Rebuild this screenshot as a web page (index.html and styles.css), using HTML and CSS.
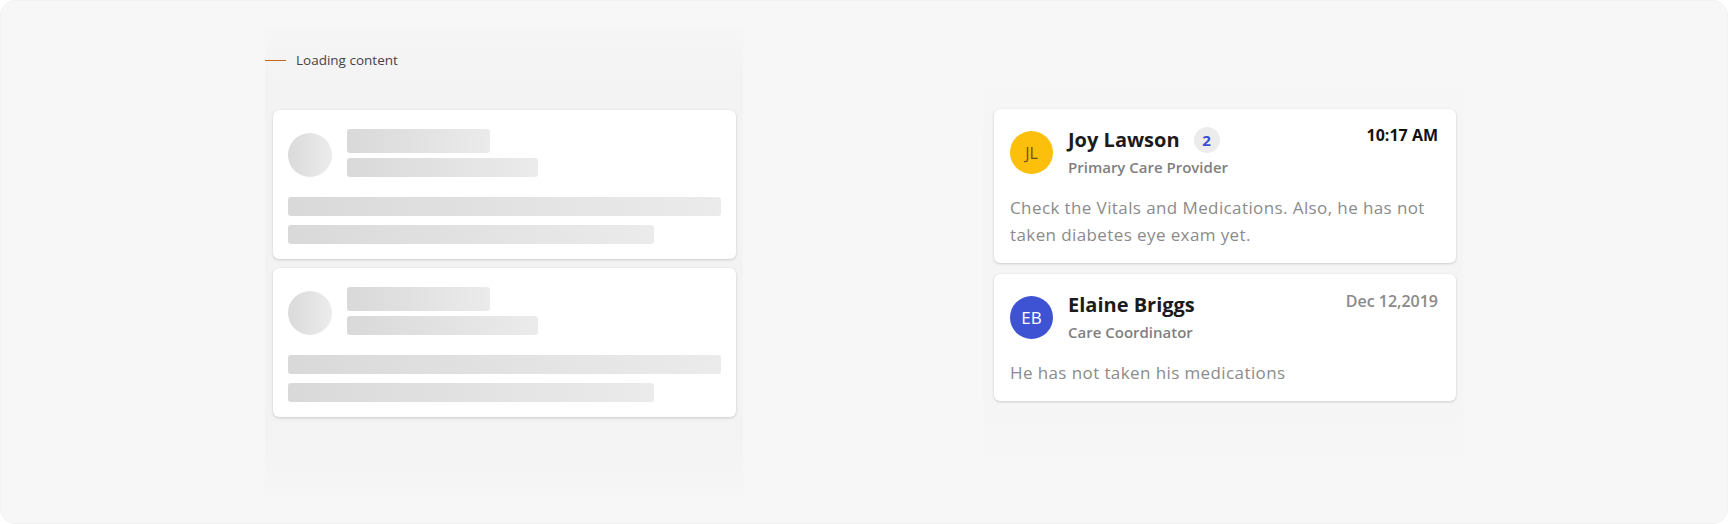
FILE: index.html
```html
<!DOCTYPE html>
<html lang="en">
<head>
<meta charset="utf-8">
<title>Messages</title>
<link rel="stylesheet" href="styles.css">
</head>
<body>
<div class="frame">
  <section class="panel panel-loading">
    <div class="loading-head">
      <span class="loading-line"></span>
      <span class="loading-text">Loading content</span>
    </div>
    <div class="card skel-card">
      <div class="skel-head">
        <div class="skel-circle"></div>
        <div class="skel-lines">
          <div class="skel-bar skel-title"></div>
          <div class="skel-bar skel-sub"></div>
        </div>
      </div>
      <div class="skel-bar skel-full"></div>
      <div class="skel-bar skel-part"></div>
    </div>
    <div class="card skel-card">
      <div class="skel-head">
        <div class="skel-circle"></div>
        <div class="skel-lines">
          <div class="skel-bar skel-title"></div>
          <div class="skel-bar skel-sub"></div>
        </div>
      </div>
      <div class="skel-bar skel-full"></div>
      <div class="skel-bar skel-part"></div>
    </div>
  </section>

  <section class="panel panel-msgs">
    <article class="card msg-card msg-first">
      <div class="msg-head">
        <div class="avatar avatar-jl">JL</div>
        <div class="msg-who">
          <div class="msg-name-row">
            <span class="msg-name">Joy Lawson</span>
            <span class="badge">2</span>
          </div>
          <div class="msg-role">Primary Care Provider</div>
        </div>
        <div class="msg-time">10:17 AM</div>
      </div>
      <p class="msg-body">Check the Vitals and Medications. Also, he has not taken diabetes eye exam yet.</p>
    </article>
    <article class="card msg-card">
      <div class="msg-head">
        <div class="avatar avatar-eb">EB</div>
        <div class="msg-who">
          <div class="msg-name-row">
            <span class="msg-name">Elaine Briggs</span>
          </div>
          <div class="msg-role">Care Coordinator</div>
        </div>
        <div class="msg-time msg-date">Dec 12,2019</div>
      </div>
      <p class="msg-body">He has not taken his medications</p>
    </article>
  </section>
</div>
</body>
</html>
```

FILE: styles.css
```css
* { box-sizing: border-box; }

html, body {
  margin: 0;
  padding: 0;
  background: #ffffff;
}

body {
  font-family: "Open Sans", "Noto Sans", "Lato", sans-serif;
  width: 1728px;
  height: 524px;
  overflow: hidden;
}

.frame {
  width: 1728px;
  height: 524px;
  border-radius: 16px;
  background: #f7f7f7;
  box-shadow: inset 0 0 0 1px #f2f2f2;
  display: flex;
  align-items: flex-start;
}

.panel {
  display: flex;
  flex-direction: column;
}

.panel-loading {
  margin-left: 265px;
  margin-top: 28px;
  width: 478px;
  height: 468px;
  padding: 23px 7px 0 8px;
  background: linear-gradient(to bottom, #f6f6f6 0%, #f3f3f3 12%, #f3f3f3 85%, #f6f6f6 100%);
}

.loading-head {
  display: flex;
  align-items: center;
  height: 18px;
  margin-left: -8px;
}

.loading-line {
  width: 21px;
  height: 1px;
  background: #c4671d;
  margin-right: 10px;
}

.loading-text {
  font-size: 13.5px;
  line-height: 18px;
  color: #444444;
}

.card {
  background: #ffffff;
  border-radius: 6px;
  box-shadow: 0 1px 3px rgba(0, 0, 0, 0.16), 0 0 1px rgba(0, 0, 0, 0.08);
}

.skel-card {
  width: 463px;
  padding: 19px 15px 15px 15px;
  margin-top: 9px;
}

.loading-head + .skel-card {
  margin-top: 41px;
}

.skel-head {
  display: flex;
  align-items: center;
  margin-bottom: 20px;
}

.skel-circle {
  width: 44px;
  height: 44px;
  border-radius: 50%;
  background: linear-gradient(to right, #dadada, #ececec);
  margin-right: 15px;
  margin-top: 4px;
}

.skel-lines {
  display: flex;
  flex-direction: column;
  gap: 5px;
}

.skel-bar {
  border-radius: 3px;
  background: linear-gradient(to right, #d9d9d9, #ebebeb);
  height: 19px;
}

.skel-title { width: 143px; height: 24px; }
.skel-sub { width: 191px; }
.skel-full { width: 433px; }
.skel-part { width: 366px; margin-top: 9px; }

.panel-msgs {
  margin-left: 240px;
  margin-top: 77px;
  width: 480px;
  height: 398px;
  padding: 32px 7px 0 11px;
  background: linear-gradient(to bottom, #f7f7f7 0%, #f5f5f5 15%, #f5f5f5 80%, #f7f7f7 100%);
}

.msg-card {
  width: 462px;
  padding: 18px 18px 15px 16px;
}

.msg-first {
  margin-bottom: 11px;
}

.msg-head {
  display: flex;
  align-items: center;
}

.avatar {
  width: 43px;
  height: 43px;
  border-radius: 50%;
  display: flex;
  align-items: center;
  justify-content: center;
  flex-shrink: 0;
  margin-right: 15px;
  font-size: 16px;
}

.avatar-jl {
  background: #fcbf0c;
  color: #6f4f1a;
  font-weight: 400;
}

.avatar-eb {
  background: #3e53d3;
  color: #ffffff;
  font-size: 17px;
}

.msg-who {
  flex: 1;
  display: flex;
  flex-direction: column;
}

.msg-name-row {
  display: flex;
  align-items: center;
  height: 26px;
}

.msg-name {
  font-size: 20px;
  line-height: 26px;
  font-weight: 700;
  color: #1b1b1b;
}

.badge {
  width: 26px;
  height: 26px;
  border-radius: 50%;
  background: #ececec;
  color: #3a4fd6;
  font-size: 15px;
  font-weight: 700;
  display: flex;
  align-items: center;
  justify-content: center;
  margin-left: 14px;
}

.msg-role {
  margin-top: 3px;
  font-size: 15px;
  line-height: 22px;
  font-weight: 600;
  color: #7f7f7f;
}

.msg-time {
  align-self: flex-start;
  margin-top: -2px;
  font-size: 16px;
  line-height: 20px;
  font-weight: 700;
  color: #111111;
}

.msg-date {
  color: #8a8a8a;
  font-weight: 600;
  margin-top: -1px;
}

.msg-body {
  margin: 16px 0 0 0;
  font-size: 17px;
  letter-spacing: 0.4px;
  line-height: 27px;
  color: #8b8b8b;
}
```
